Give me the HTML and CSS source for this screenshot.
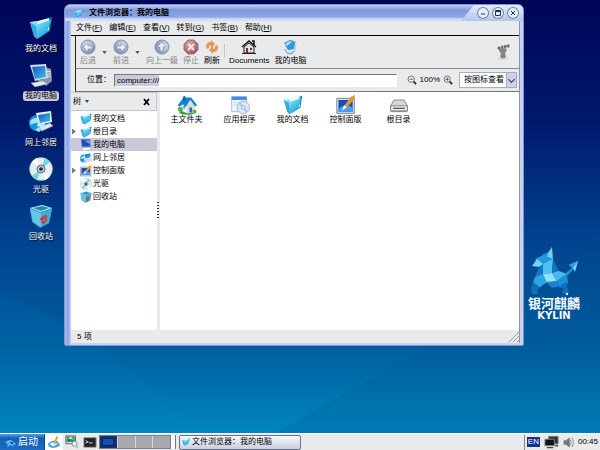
FILE: index.html
```html
<!DOCTYPE html>
<html lang="zh-CN">
<head>
  <meta charset="UTF-8">
  <meta name="viewport" content="width=device-width, initial-scale=1.0">
  <title>文件浏览器：我的电脑</title>
  <link rel="stylesheet" href="styles.css">
</head>
<body>
  <!-- shared icons -->
  <svg class="sprite" aria-hidden="true">
    <defs>
      <linearGradient id="gBlue" x1="0" y1="0" x2="1" y2="1">
        <stop offset="0" stop-color="#b4f0ff"/><stop offset=".5" stop-color="#4cc6f0"/><stop offset="1" stop-color="#128fd0"/>
      </linearGradient>
      <linearGradient id="gScreen" x1="0" y1="0" x2="1" y2="1">
        <stop offset="0" stop-color="#0a56b4"/><stop offset="1" stop-color="#45c2f5"/>
      </linearGradient>
      <radialGradient id="gBall" cx=".4" cy=".3" r=".7">
        <stop offset="0" stop-color="#dde4f0"/><stop offset="1" stop-color="#7f90b4"/>
      </radialGradient>
      <radialGradient id="gStop" cx=".4" cy=".3" r=".7">
        <stop offset="0" stop-color="#d8a8a8"/><stop offset="1" stop-color="#a85a60"/>
      </radialGradient>
    </defs>
    <symbol id="folder" viewBox="0 0 24 24">
      <path d="M12 5l11-4-2 14-11 7z" fill="#0d7fb8"/>
      <path d="M5 6l15-4v12l-10 5z" fill="#e8fbff"/>
      <path d="M1 6l6-1 2 3 13-4-4 12-10 7-3-3z" fill="url(#gBlue)"/>
      <path d="M1 6l4 14 3 3-1-13z" fill="#35aadb"/>
    </symbol>
    <symbol id="computer" viewBox="0 0 24 24">
      <path d="M16 4l6 2 1 12-6 5-3-4z" fill="#8d98a6"/>
      <path d="M17 8l5 1M17 11l5 0M17 14l5-1" stroke="#e8edf2"/>
      <path d="M1 2l16-1 2 14-13 3z" fill="#d5dbe2"/>
      <path d="M3 4l13-1 1 11-11 2z" fill="url(#gScreen)"/>
      <path d="M9 17l5-1 1 4-5 1z" fill="#8f9baa"/>
      <path d="M2 20l12-2 4 3-12 3z" fill="#e4e9ee" stroke="#8c97a4" stroke-width=".5"/>
    </symbol>
    <symbol id="monitor" viewBox="0 0 16 16">
      <path d="M1 0h13l1 11H2z" fill="#7f92c8"/>
      <path d="M2 1h11v9H3z" fill="#1b50b8"/><path d="M6 2h7v5z" fill="#6ba6f0"/>
      <path d="M2 12l11-1 3 3-12 2z" fill="#f8f9fc" stroke="#8490ac" stroke-width=".6"/>
    </symbol>
    <symbol id="network" viewBox="0 0 24 24">
      <circle cx="8" cy="13" r="8" fill="#1795d8"/>
      <path d="M1 11q5-5 9-2t-3 4-5 4zM6 20l5-4 3 3-4 3z" fill="#9be5fb"/>
      <path d="M7 3l15-2 1 11-13 3z" fill="#e7f6fc"/>
      <path d="M9 5l12-2v8l-10 2z" fill="url(#gScreen)"/>
      <path d="M10 17l11-4 3 3-11 5z" fill="#dce8ef" stroke="#6f99b2" stroke-width=".6"/>
      <path d="M9 12l8 3-3 3-6-2z" fill="#b8e8fa"/>
    </symbol>
    <symbol id="disc" viewBox="0 0 24 24">
      <circle cx="12" cy="12" r="11.5" fill="#e4eef0" stroke="#8ab1b8" stroke-width=".6"/>
      <path d="M12 12L16 1l5 4zM12 12L8 23l-5-4z" fill="#6fd8dc"/>
      <path d="M12 12L3 5a12 12 0 0 1 5-4zM12 12l9 7a12 12 0 0 1-5 4z" fill="#fff"/>
      <circle cx="12" cy="12" r="4" fill="#b6c6ca" stroke="#5d7278"/>
      <circle cx="12" cy="12" r="1.800" fill="#1c2c34"/>
    </symbol>
    <symbol id="trash" viewBox="0 0 24 24">
      <path d="M1 4l12-3 10 3-3 15-9 5-8-6z" fill="#2c9fca"/>
      <path d="M1 4l12-3 10 3-11 4z" fill="#a9eafa"/>
      <path d="M4 4l9-2 7 2-8 3z" fill="#2688b0"/>
      <path d="M1 5l11 4v14l-8-5z" fill="#63c8e6"/>
      <path d="M12 9l11-4-3 14-8 4z" fill="#3daed4"/>
      <path d="M11 15l3-3 2 2-3 3zM15 11l3 1-1 3zM12 18l4-1-1 3zM16 16l2-1-1 3z" fill="#dc2f3c" stroke="#dc2f3c" stroke-width=".6"/>
    </symbol>
    <symbol id="house" viewBox="0 0 24 24">
      <path d="M3 19q8-5 19 0l-3 4q-10 2-16-1z" fill="#3a9e36"/>
      <path d="M5 11l9-7 7 8v9l-9 1-7-3z" fill="#f4f7fb"/>
      <path d="M12 12l5-4 4 4v9l-9 1z" fill="#cfdaea"/>
      <path d="M15 15h3v6h-3z" fill="#3965a8"/><path d="M7 13l3 1v3l-3-1z" fill="#7eacd8"/>
      <path d="M1 12l7-9 9 0 7 9-2 2-6-8-6 9-3-4-4 3z" fill="#1682cf"/>
      <path d="M7 2l3-1v6H7z" fill="#1a66a4"/>
      <circle cx="4" cy="17" r="3" fill="#52b844"/><circle cx="21" cy="20" r="2.500" fill="#52b844"/>
    </symbol>
    <symbol id="apps" viewBox="0 0 24 24">
      <path d="M2 2h18v18H2z" fill="#eef5fd" stroke="#8db8e8"/>
      <path d="M2 2h18v4H2z" fill="#3f8fe4"/>
      <path d="M4 9h7M4 12h5" stroke="#b8d3f0"/>
      <circle cx="16" cy="15" r="7.500" fill="#dfe7fb" stroke="#9aafd8"/>
      <path d="M16 15l-6-4 3-3zM16 15l6 4-3 3z" fill="#a9c6f5"/>
      <circle cx="16" cy="15" r="2" fill="#fff" stroke="#8097c4"/>
    </symbol>
    <symbol id="panel" viewBox="0 0 24 24">
      <path d="M1 4h21v18H1z" fill="#d7dfea" stroke="#66748c"/>
      <path d="M3 6h17v14H3z" fill="#1650b4"/><path d="M3 17q7-8 17-2v5H3z" fill="#4f9cf0"/>
      <path d="M9 14l9-12 5-2-1 5-10 11z" fill="#e09a30"/>
      <path d="M10 12l3 3-6 4z" fill="#f3f3f3"/>
    </symbol>
    <symbol id="drive" viewBox="0 0 24 24">
      <path d="M6 6h12l4 7v6q0 1-1 1H3q-1 0-1-1v-6z" fill="#d5d8da" stroke="#777"/>
      <path d="M2 13h20v6H2z" fill="#eee" stroke="#777"/>
      <path d="M5 16h14" stroke="#555" stroke-width="1.500"/>
    </symbol>
    <symbol id="horse" viewBox="0 0 50 50">
      <path d="M23 0l1 13-8-3z" fill="#6fcdf4"/><path d="M19 5l-1 6-5-3z" fill="#1c8edb"/>
      <path d="M6 12l8-4 10 4-4 8-9-1z" fill="#2098e0"/>
      <path d="M3 19l5-7 6 5-4 3z" fill="#74d4f6"/>
      <path d="M14 17l10-5-1 14-9 1z" fill="#4fc0ee"/>
      <path d="M9 22l5-5v10l-8 4z" fill="#1478c4"/>
      <path d="M6 30l8-3 4 8-8 6-6-5z" fill="#2da6e6"/>
      <path d="M4 35l7 5-3 4 2 3H3l-1-5z" fill="#0f70be"/>
      <path d="M24 12l6 13-7 2z" fill="#1174c0"/>
      <path d="M14 27l9-1 5 8-10 2z" fill="#8fe2fa"/>
      <path d="M23 26l7-2 8 3-10 7z" fill="#47b9ec"/>
      <path d="M17 35l11-1 3 5-8 2z" fill="#1583d0"/>
      <path d="M28 34l10-7 1 9-8 5z" fill="#1b90da"/>
      <path d="M31 39l6-4 3 12h-6l-1-3 2-2z" fill="#0f6fbd"/>
      <path d="M37 26l7-6 1 2-7 7z" fill="#1f90d8"/>
      <path d="M40 18l9-4-3 11-2-4z" fill="#74d3f6"/><path d="M40 18l9-4-5 7z" fill="#2b9fe2"/>
      <circle cx="38" cy="47" r="1.200" fill="#d4ffd0"/>
    </symbol>
    <symbol id="arrow" viewBox="0 0 16 16">
      <circle cx="8" cy="8" r="7" fill="url(#gBall)" stroke="#8490a6"/>
      <path d="M3 8l5-4v3h4v3H8v3z" fill="#e9eef7" stroke="#7284a8" stroke-width=".6"/>
    </symbol>
    <symbol id="kylin-pen" viewBox="0 0 16 16">
      <path d="M1 10q6-6 12-2l2 4q-7 5-13 1z" fill="#4aa3e8"/><path d="M3 10q5-3 9 0l-5 3z" fill="#fff"/>
      <path d="M7 10l4-9 2 1-4 9z" fill="#eda140"/>
    </symbol>
    <symbol id="zoomglass" viewBox="0 0 12 12">
      <circle cx="5" cy="5" r="3.800" fill="#f5f7f8" stroke="#555"/>
      <path d="M8 8l3 3" stroke="#222" stroke-width="2"/><path d="M3 5h4" stroke="#333"/>
    </symbol>
  </svg>

  <main class="desktop">
    <svg class="wallpaper" viewBox="0 0 600 433" preserveAspectRatio="none" aria-hidden="true">
      <path d="M0 296Q70 310 200 433H0z" fill="#0a8cc4" opacity=".1"/>
      <path d="M275 433L430 346 600 235V433z" fill="#00508f" opacity=".16"/>
    </svg>

    <nav class="shortcuts">
      <a href="#"><svg><use href="#folder"/></svg><span>我的文档</span></a>
      <a href="#" class="selected"><svg><use href="#computer"/></svg><span>我的电脑</span></a>
      <a href="#"><svg><use href="#network"/></svg><span>网上邻居</span></a>
      <a href="#"><svg><use href="#disc"/></svg><span>光驱</span></a>
      <a href="#"><svg><use href="#trash"/></svg><span>回收站</span></a>
    </nav>

    <div class="brand">
      <svg><use href="#horse"/></svg>
      <strong>银河麒麟</strong>
      <b>KYLIN</b>
    </div>

    <section class="window">
      <header class="titlebar">
        <div class="title"><svg><use href="#folder"/></svg><h1>文件浏览器：我的电脑</h1></div>
        <div class="controls">
          <button aria-label="最小化"><svg viewBox="0 0 12 12"><path d="M4 7h4"/></svg></button>
          <button aria-label="最大化"><svg viewBox="0 0 12 12"><path d="M3.500 3.500h5v5h-5zM3 4.500h6"/></svg></button>
          <button aria-label="关闭"><svg viewBox="0 0 12 12"><path d="M4 4l4 4M8 4L4 8"/></svg></button>
        </div>
      </header>

      <div class="frame">
        <nav class="menubar">
          <button>文件(<u>F</u>)</button>
          <button>编辑(<u>E</u>)</button>
          <button>查看(<u>V</u>)</button>
          <button>转到(<u>G</u>)</button>
          <button>书签(<u>B</u>)</button>
          <button>帮助(<u>H</u>)</button>
        </nav>

        <div class="toolbar">
          <button class="tool dim"><svg><use href="#arrow"/></svg>后退</button>
          <button class="drop" aria-label="后退历史"><svg viewBox="0 0 6 4"><path d="M0 0h6L3 4z"/></svg></button>
          <button class="tool dim"><svg class="right"><use href="#arrow"/></svg>前进</button>
          <button class="drop" aria-label="前进历史"><svg viewBox="0 0 6 4"><path d="M0 0h6L3 4z"/></svg></button>
          <button class="tool dim"><svg class="up"><use href="#arrow"/></svg>向上一级</button>
          <button class="tool dim"><svg viewBox="0 0 16 16"><path d="M5 1h6l4 4v6l-4 4H5l-4-4V5z" fill="url(#gStop)" stroke="#9c7074"/><path d="M5 5l6 6M11 5l-6 6" stroke="#f5eaea" stroke-width="2"/></svg>停止</button>
          <button class="tool"><svg viewBox="0 0 16 16"><path d="M2 8Q2 3 7 3V1l4 4-4 4V6Q5 6 5 9l-2 1zM14 8q0 5-5 5v2l-4-4 4-4v3q2 0 2-3l2-1z" fill="#ee9448"/></svg>刷新</button>
          <span class="separator"></span>
          <button class="tool"><svg viewBox="0 0 16 16"><path d="M3 8v6h10V8L8 4z" fill="#e8dcd8" stroke="#222"/><path d="M1 8l7-6 7 6M11 2h2v4" fill="none" stroke="#111" stroke-width="1.500"/><path d="M5 9h2v5H5zM9 9h2v2H9z" fill="#5c3a3a"/><path d="M1 14.500h14" stroke="#222"/></svg>Documents</button>
          <button class="tool"><svg viewBox="0 0 16 16"><path d="M9 1l5 2-1 9-5 3z" fill="#dce4ec" stroke="#9aa8b6" stroke-width=".5"/><path d="M2 4l6-3 5 2-1 7-6 1z" fill="#2c96d8"/><path d="M3 5l5-3 2 1-5 4z" fill="#a8e4fa"/><path d="M3 10l2 4 5 1 2-3" fill="none" stroke="#5fa6cc"/></svg>我的电脑</button>
          <svg class="foot" viewBox="0 0 14 16"><path d="M3 5q4-2 8 0-1 3-2 4l1 4q-3 3-6 0l1-4Q3 8 3 5z" fill="#858585"/><circle cx="3" cy="4" r="1.500" fill="#666"/><circle cx="6" cy="3" r="1.500" fill="#777"/><circle cx="9" cy="2.500" r="1.500" fill="#666"/><circle cx="12" cy="2" r="1.800" fill="#777"/><path d="M1 15h12" stroke="#ccc"/></svg>
        </div>

        <div class="location">
          <label for="address">位置：</label>
          <input id="address" type="text" value="computer:///">
          <div class="zoom">
            <button aria-label="缩小"><svg><use href="#zoomglass"/></svg></button>
            <span>100%</span>
            <button aria-label="放大"><svg viewBox="0 0 12 12"><use href="#zoomglass"/><path d="M5 3v4" stroke="#333"/></svg></button>
          </div>
          <div class="view">
            <select aria-label="查看方式"><option>按图标查看</option></select>
          </div>
        </div>

        <div class="content">
          <aside class="sidebar">
            <div class="side-head">
              <button class="mode">树<i class="caret"></i></button>
              <button class="close" aria-label="关闭侧栏"><svg viewBox="0 0 8 8"><path d="M1 1l5 6M6 1L1 7" stroke="#000" stroke-width="1.800"/></svg></button>
            </div>
            <ul class="tree">
              <li><i></i><svg><use href="#folder"/></svg>我的文档</li>
              <li><i class="expand"></i><svg><use href="#folder"/></svg>根目录</li>
              <li class="current"><i></i><svg><use href="#monitor"/></svg>我的电脑</li>
              <li><i></i><svg><use href="#network"/></svg>网上邻居</li>
              <li><i class="expand"></i><svg><use href="#panel"/></svg>控制面版</li>
              <li><i></i><svg><use href="#disc"/></svg>光驱</li>
              <li><i></i><svg><use href="#trash"/></svg>回收站</li>
            </ul>
          </aside>
          <div class="splitter"><span></span></div>
          <div class="files">
            <a href="#"><svg><use href="#house"/></svg>主文件夹</a>
            <a href="#"><svg><use href="#apps"/></svg>应用程序</a>
            <a href="#"><svg><use href="#folder"/></svg>我的文档</a>
            <a href="#"><svg><use href="#panel"/></svg>控制面版</a>
            <a href="#"><svg><use href="#drive"/></svg>根目录</a>
          </div>
        </div>

        <footer class="status">
          <span>5 项</span>
          <svg viewBox="0 0 10 10"><path d="M0 10L10 0M4 10l6-6M8 10l2-2" stroke="#999"/></svg>
        </footer>
      </div>
    </section>
  </main>

  <footer class="taskbar">
    <button class="start"><svg viewBox="0 0 16 16"><path d="M6 0l2 5 6 3 2 4-4-1 1 4-4-3-5 3 1-4-4-2 4-3z" fill="#4fb4f0"/><path d="M6 0l2 5-3 1zM8 8l6 0-4 3z" fill="#0c4c98"/></svg>启动</button>
    <button class="launch white" aria-label="写作"><svg><use href="#kylin-pen"/></svg></button>
    <button class="launch" aria-label="浏览"><svg viewBox="0 0 16 16"><path d="M1 1h11v9H1z" fill="#d8e4dc" stroke="#556"/><path d="M2 2h9v6H2z" fill="#2f8a62"/><path d="M3 4l4-2 3 3z" fill="#bfe6f8"/><circle cx="11" cy="10" r="3" fill="#ddeef8" stroke="#888"/><path d="M12 12l3 3" stroke="#bbb" stroke-width="2"/></svg></button>
    <button class="launch" aria-label="终端"><svg viewBox="0 0 16 16"><path d="M1 3h14v11H1z" fill="#222" stroke="#999"/><path d="M3 6l3 2-3 1M7 9h4" stroke="#eee" fill="none"/></svg></button>
    <div class="pager">
      <button class="active" aria-label="工作区 1"><span></span></button>
      <button aria-label="工作区 2"></button>
      <button aria-label="工作区 3"></button>
      <button aria-label="工作区 4"></button>
    </div>
    <span class="grip"></span>
    <button class="task"><svg><use href="#folder"/></svg>文件浏览器：我的电脑</button>
    <div class="tray">
      <span class="lang">EN</span>
      <svg class="net" viewBox="0 0 16 14"><path d="M5 1h10v8H5z" fill="#333" stroke="#777"/><path d="M1 4h10v7H1z" fill="#111" stroke="#888"/><path d="M3 13h7M12 11h3" stroke="#444" stroke-width="1.500"/></svg>
      <svg class="vol" viewBox="0 0 12 12"><path d="M1 4h2l4-3v10L3 8H1z" fill="#777" stroke="#555" stroke-width=".5"/><path d="M8 3q2 3 0 6M10 1q3 5 0 10" fill="none" stroke="#888"/></svg>
      <time>00:45</time>
    </div>
  </footer>
</body>
</html>
```

FILE: styles.css
```css
* {
  margin: 0;
  padding: 0;
  box-sizing: border-box;
}

body {
  min-height: 100vh;
  display: flex;
  flex-direction: column;
  font: 8px/10px "Liberation Sans", "Noto Sans CJK SC", sans-serif;
  color: #000;
  overflow: hidden;
}

button, input, select {
  font: inherit;
  color: inherit;
  background: none;
  border: 0;
}

a {
  color: inherit;
  text-decoration: none;
}

svg {
  display: block;
  flex: none;
}

.sprite {
  position: absolute;
  width: 0;
  height: 0;
}

/* desktop */
.desktop {
  position: relative;
  flex: 1;
  background: linear-gradient(#000558, #00186c 28%, #00408c 53%, #005e9e 80%, #0086bb);
}

.wallpaper {
  position: absolute;
  width: 100%;
  height: 100%;
}

.shortcuts {
  position: relative;
  width: 82px;
  padding-top: 16px;
  display: flex;
  flex-direction: column;
  gap: 9px;
}

.shortcuts a {
  display: flex;
  flex-direction: column;
  align-items: center;
  gap: 4px;
  color: #fff;
  text-shadow: 1px 1px 1px #000;
}

.shortcuts svg {
  width: 24px;
  height: 24px;
}

.shortcuts span {
  padding: 0 2px;
  border-radius: 3px;
}

.shortcuts .selected span {
  background: #c9cbdc;
  color: #000;
  text-shadow: none;
}

.brand {
  position: absolute;
  right: 20px;
  bottom: 112px;
  display: flex;
  flex-direction: column;
  align-items: center;
  color: #f4f9ff;
}

.brand svg {
  width: 50px;
  height: 50px;
}

.brand strong {
  font-size: 13px;
  line-height: 14px;
}

.brand b {
  font: bold 10px/10px "DejaVu Sans", sans-serif;
}

/* file browser window */
.window {
  position: absolute;
  top: 4px;
  left: 64px;
  right: 76px;
  bottom: 87px;
  padding: 0 3px 2px 6px;
  display: flex;
  flex-direction: column;
  background: linear-gradient(90deg, #a9bcf0, #8ba3e4 3px, #c8d3f4 6px, #c8d3f4);
  border: 1px solid #7f93cc;
  border-radius: 6px 6px 2px 2px;
}

.titlebar {
  height: 16px;
  margin: 0 -3px 0 -6px;
  display: flex;
  background: linear-gradient(#c3d1f6, #7f98dc 5px, #8da5e4 12px, #d4dcf6 14px);
  border-radius: 5px 5px 0 0;
}

.title {
  flex: 1;
  padding-left: 9px;
  display: flex;
  align-items: center;
  gap: 6px;
}

.title svg {
  width: 9px;
  height: 9px;
}

h1 {
  font-size: 8px;
  font-weight: bold;
}

.controls {
  padding: 0 4px 0 16px;
  display: flex;
  align-items: center;
  gap: 3px;
  background: linear-gradient(#e6ebfb, #b5c5ef);
  border-radius: 0 5px 0 0;
  clip-path: polygon(13px 0, 100% 0, 100% 100%, 0 100%);
}

.controls button {
  width: 12px;
  height: 12px;
  background: #e3edf6;
  border-radius: 50%;
  box-shadow: 0 0 0 1px #6c839f inset;
}

.controls svg {
  fill: none;
  stroke: #16365c;
}

.frame {
  flex: 1;
  display: flex;
  flex-direction: column;
  min-height: 0;
  background: #e8eaec;
  border-right: 1px solid #8d93a8;
}

.menubar {
  height: 15px;
  padding-left: 5px;
  display: flex;
  align-items: center;
  gap: 7px;
  border-bottom: 1px solid #000;
}

.toolbar {
  height: 33px;
  padding: 0 9px 0 4px;
  margin-left: 4px;
  display: flex;
  align-items: center;
  border-left: 1px solid #222;
  border-bottom: 1px solid #888;
}

.tool {
  min-width: 16px;
  display: flex;
  flex-direction: column;
  align-items: center;
  gap: 1px;
}

.tool + .tool {
  margin-left: 5px;
}

.tool svg {
  width: 16px;
  height: 16px;
}

.dim {
  color: #85857f;
}

.right {
  transform: scaleX(-1);
}

.up {
  transform: rotate(90deg);
}

.drop {
  width: 17px;
  display: grid;
  place-items: center;
}

.drop svg {
  width: 5px;
  height: 3px;
  fill: #556;
}

.separator {
  width: 1px;
  height: 14px;
  margin: 8px 4px 0;
  align-self: flex-start;
  background: #c5c7ca;
}

.toolbar .foot {
  width: 14px;
  height: 16px;
  margin-left: auto;
}

.location {
  height: 23px;
  margin-left: 4px;
  padding: 0 2px 0 11px;
  display: flex;
  align-items: center;
  border-left: 1px solid #222;
  border-bottom: 1px solid #777;
}

.location label {
  width: 27px;
}

.location input {
  flex: 1;
  min-width: 0;
  height: 13px;
  padding-left: 2px;
  background: linear-gradient(90deg, #c9cbdc 44px, #fff 44px);
  border: 1px solid #fff;
  border-top-color: #777;
  border-left-color: #777;
}

.zoom {
  margin: 0 6px 0 10px;
  display: flex;
  align-items: center;
  gap: 3px;
}

.zoom svg {
  width: 10px;
  height: 10px;
}

.view {
  position: relative;
  width: 58px;
  height: 16px;
}

.view select {
  width: 100%;
  height: 100%;
  padding-left: 4px;
  appearance: none;
  background: linear-gradient(90deg, #fff 46px, #a5adc0 46px 47px, #cbd3e8 47px);
  border: 1px solid #a5adc0;
}

/* chevron over the select */
.view::after {
  content: "";
  position: absolute;
  top: 5px;
  right: 3px;
  width: 4px;
  height: 4px;
  border: solid #334;
  border-width: 0 1px 1px 0;
  transform: rotate(45deg);
  pointer-events: none;
}

.content {
  flex: 1;
  min-height: 0;
  display: flex;
  background: #fff;
}

.sidebar {
  width: 86px;
}

.side-head {
  height: 19px;
  padding: 0 5px 0 2px;
  display: flex;
  align-items: center;
  justify-content: space-between;
  background: #e8eaec;
  border: 1px solid #c5c7cc;
  border-left: 0;
}

.mode {
  display: flex;
  align-items: center;
  gap: 4px;
}

.caret {
  width: 4px;
  height: 3px;
  background: #444;
  clip-path: polygon(0 0, 100% 0, 50% 100%);
}

.close svg {
  width: 8px;
  height: 8px;
}

.tree {
  padding-top: 1px;
  list-style: none;
}

.tree li {
  height: 13px;
  display: flex;
  align-items: center;
}

.tree li i {
  width: 9px;
}

.tree .expand::before {
  content: "";
  display: block;
  width: 4px;
  height: 6px;
  margin-left: 1px;
  background: #777;
  clip-path: polygon(0 0, 100% 50%, 0 100%);
}

.tree svg {
  width: 12px;
  height: 12px;
  margin-right: 1px;
}

.tree .current {
  background: #c9c9da;
}

.splitter {
  width: 3px;
  display: flex;
  align-items: center;
  background: #e8eaec;
}

.splitter span {
  width: 2px;
  height: 18px;
  background: repeating-linear-gradient(#333 0 1px, #eee 1px 3px);
}

.files {
  flex: 1;
  padding: 3px 0 0;
  display: flex;
  align-items: flex-start;
}

.files a {
  width: 53px;
  display: flex;
  flex-direction: column;
  align-items: center;
}

.files svg {
  width: 20px;
  height: 20px;
}

.status {
  height: 13px;
  padding-left: 6px;
  display: flex;
  align-items: center;
  justify-content: space-between;
}

.status svg {
  width: 10px;
  height: 10px;
}

/* taskbar */
.taskbar {
  height: 17px;
  display: flex;
  align-items: center;
  background: #e8eaec;
  border-top: 1px solid #fff;
}

.start {
  width: 45px;
  height: 16px;
  padding-left: 4px;
  display: flex;
  align-items: center;
  gap: 2px;
  font-size: 10px;
  color: #fff;
  background: linear-gradient(#5ba1e0, #1560b4 4px, #1c6cc2);
  border-right: 1px solid #124a8c;
}

.start svg {
  width: 12px;
  height: 12px;
}

.launch {
  width: 18px;
  height: 16px;
  display: grid;
  place-items: center;
}

.launch.white {
  background: #fff;
}

.launch svg {
  width: 14px;
  height: 14px;
}

.pager {
  width: 72px;
  height: 14px;
  display: grid;
  grid-template-columns: repeat(4, 1fr);
  gap: 1px;
  background: #d5d7da;
  border: 1px solid #77808c;
}

.pager button {
  background: #a6a8ac;
}

.pager .active {
  padding: 2px;
  background: #10306e;
}

.pager span {
  display: block;
  width: 12px;
  height: 8px;
  background: #1450b8;
  border: 1px solid #0a2458;
}

.grip {
  width: 5px;
  height: 14px;
  margin-right: 3px;
  background: #f8f9fa;
  border-right: 1px solid #777;
}

.task {
  width: 122px;
  height: 15px;
  padding: 0 2px;
  display: flex;
  align-items: center;
  gap: 2px;
  background: linear-gradient(#f8f9fc, #c8cee0);
  border: 1px solid #68718c;
  border-radius: 2px;
}

.task svg {
  width: 8px;
  height: 10px;
}

.tray {
  height: 15px;
  margin-left: auto;
  padding: 0 2px;
  display: flex;
  align-items: center;
  gap: 4px;
  border-left: 1px solid #888;
}

.lang {
  padding: 0 1px;
  color: #fff;
  background: #12328e;
}

.net {
  width: 15px;
  height: 14px;
}

.vol {
  width: 11px;
  height: 11px;
}
```
